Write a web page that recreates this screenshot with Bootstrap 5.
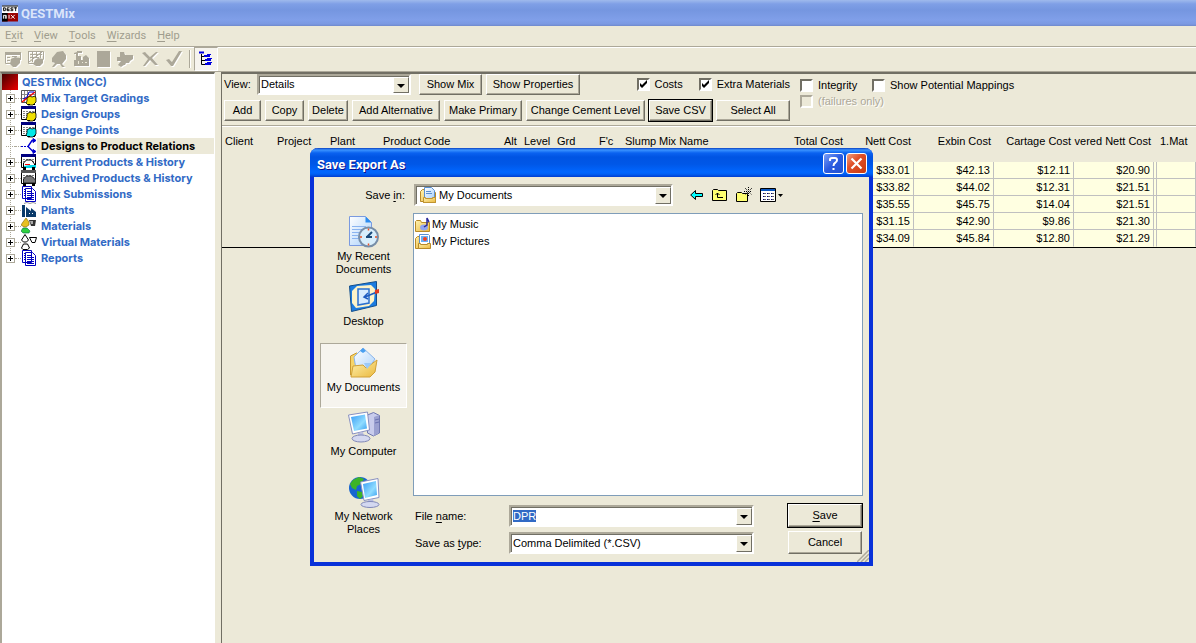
<!DOCTYPE html>
<html lang="en">
<head>
<meta charset="utf-8">
<meta name="viewport" content="width=device-width, initial-scale=1">
<title>QESTMix</title>
<link rel="stylesheet" href="https://cdn.jsdelivr.net/npm/bootstrap@5.3.0/dist/css/bootstrap.min.css">
<style>
:root{--face:#ece9d8;--shade:#aca899;--dark:#716f64;--link:#316ac5}
body{font-family:"Liberation Sans",Arial,sans-serif;font-size:11px;line-height:13px;color:#000;background:var(--face)}
svg{display:block;flex:none}
.app{overflow:hidden}
.app-title{height:26px;padding:0 2px;gap:3px;background:linear-gradient(#9fbaec 0,#7f9fe6 4px,#7596e0 10px,#809fe9 20px,#7b99e2 24px,#6f89cb 26px);color:#dbe5fa;font:bold 13px Roboto,sans-serif}
.app-title h1{font:inherit;margin:0}
.menu-bar{height:20px;padding:0 5px;gap:11px}
.menu-bar a{color:#a09d8e;text-decoration:none;font:11px/18px Roboto,sans-serif}
u{text-underline-offset:2px}
.tool-bar{height:26px;padding:0 5px;gap:7px;border-top:1px solid var(--shade);border-bottom:1px solid var(--shade);box-shadow:inset 0 1px #fff}
.tool-bar button{border:0;padding:0;background:none;color:var(--shade);filter:drop-shadow(1px 1px 0 #fff)}
.tool-bar .rule{width:2px;height:18px;background:var(--shade);border-right:1px solid #fff}
.tool-bar button.pressed{filter:none;padding:3px;border:1px solid;border-color:var(--shade) #fff #fff var(--shade);background:#f6f4ee;margin-left:-4px}
.tree-pane{width:215px;background:#fff;border:solid;border-width:2px 1px 0 2px;border-color:var(--dark) #fff #fff var(--shade)}
.splitter{width:6px}
.tree,.tree ul{list-style:none;margin:0;padding:0}
.tree a{color:var(--link);text-decoration:none;font:bold 11px/16px Inter,Arial,sans-serif;white-space:nowrap}
.tree li li{display:flex;height:16px;align-items:center;padding-left:4px;background:repeating-linear-gradient(#aca899 0 1px,#fff 1px 2px) 8px 0/1px 16px no-repeat}
.tree li li:last-child{background-size:1px 8px}
.tree li li .lead-line{width:6px;border-top:1px dotted var(--shade)}
.tree li li a{padding-left:4px;flex:1}
.expander{width:9px;height:9px;padding:0;border:1px solid var(--shade);background:linear-gradient(#000,#000) 50%/5px 1px no-repeat,linear-gradient(#000,#000) 50%/1px 5px no-repeat,#fff}
.leaf{width:9px;border-top:1px dotted var(--shade)}
.tree .picked{background:var(--face);color:#000}
.root-icon{width:16px;height:16px;background:linear-gradient(135deg,#400 0,#900 50%,#e00)}
.work{border-left:1px solid var(--dark);border-top:2px solid var(--dark);min-width:0}
.controls{padding:0 2px;height:52px;border-bottom:1px solid var(--shade);box-shadow:0 1px #fff}
.controls .combo{height:21px;width:154px}
.view-row>label{width:33px}
.xp-btn{border:1px solid;border-color:#fff var(--dark) var(--dark) #fff;box-shadow:inset -1px -1px var(--shade);background:var(--face);height:21px;padding:0;text-align:center;color:#000;line-height:17px;white-space:nowrap;flex:none}
.xp-btn.default{outline:1px solid #000;outline-offset:0}
.w37{width:37px}.w39{width:39px}.w40{width:40px}.w63{width:63px}.w74{width:74px}.w78{width:78px}.w88{width:88px}.w94{width:94px}.w119{width:119px}
.combo{position:relative;height:22px;border:2px solid;border-color:var(--shade) #fff #fff var(--shade);box-shadow:inset 1px 1px var(--dark);background:#fff}
.combo select,.combo input{appearance:none;border:0;background:none;outline:0;width:100%;height:100%;padding:0 18px 0 2px;font:inherit;color:#000}
.combo input::selection{background:#316ac5;color:#fff}
.combo .drop{position:absolute;right:0;top:1px;bottom:0;width:16px;pointer-events:none;border:1px solid;border-color:#fff var(--dark) var(--dark) #fff;background:var(--face)}
.combo .drop::after{content:"";position:absolute;left:3px;top:6px;border:4px solid transparent;border-top-color:#000;border-bottom:0}
.tick{gap:5px;white-space:nowrap}
.tick input{appearance:none;width:13px;height:13px;margin:0;border:2px solid;border-color:var(--dark) #fff #fff var(--dark);background:#fff;flex:none}
.tick input:checked{background:#fff url("data:image/svg+xml,%3Csvg xmlns='http://www.w3.org/2000/svg' viewBox='0 0 9 9'%3E%3Cpath d='M1 3v3l2 2 5-5V0L3 5z'/%3E%3C/svg%3E") center/9px 9px no-repeat}
.tick input:disabled{background:var(--face);border-color:var(--shade) #fff #fff var(--shade)}
.tick input:disabled+label{color:var(--shade);text-shadow:1px 1px #fff}
.filters{width:72px;gap:3px}
.filter-top{padding-top:5px}
.costs-grid{table-layout:fixed;width:100%;min-width:974px;border-collapse:separate;border-spacing:0;border-bottom:1px solid #000}
.costs-grid th{height:36px;padding:9px 3px 0;font-weight:400;vertical-align:top;white-space:nowrap}
.costs-grid th.tight{padding-left:0}
.costs-grid td{height:17px;padding:0 3px;line-height:16px;text-align:right}
.costs-grid td.money{background:#ffffe1;border-right:1px solid #c0c0c0;border-bottom:1px solid #c0c0c0}
.costs-grid tr:last-child td.money{border-bottom-color:#ffffe1}
.save-dialog{position:absolute;left:310px;top:148px;width:563px;border:solid #0831d9;border-width:0 4px 4px;border-radius:8px 8px 0 0;background:var(--face)}
.dialog-title{margin:0 -4px;padding:2px 6px 0 7px;height:29px;gap:2px;border-radius:8px 8px 0 0;background:linear-gradient(#0a3fc0 0,#3a93ff 2px,#0a62f0 5px,#0054e3 9px,#0057e7 16px,#0066ff 24px,#0061f5 26px,#003dd0 29px);color:#fff}
.dialog-title h2{font:bold 13px/16px Roboto,sans-serif;margin:0;padding-top:2px;text-shadow:1px 1px #0f1089}
.dialog-title button{width:21px;height:21px;border:1px solid #fff;border-radius:3px;padding:0;background:linear-gradient(135deg,#7aa0f8,#2a5be0 50%,#2352d0)}
.dialog-title button.shut{background:linear-gradient(135deg,#f0a080,#e0502a 40%,#c83a10)}
.dialog-body{display:grid;grid-template-columns:87px 1fr;column-gap:6px;padding:0 6px}
.look-in{grid-column:1/3;height:36px;gap:9px}
.look-in>label{width:85px;text-align:right}
.look-in .combo{width:259px}
.look-in .combo select{padding-left:23px}
.look-in .combo svg{position:absolute;left:4px;top:1px;pointer-events:none}
.plain{border:0;background:none;padding:0}
.places{grid-row:2/4;grid-column:1}
.places button{display:flex;flex-direction:column;align-items:center;gap:2px;width:100%;height:65px;padding:2px 0 0;border:1px solid transparent;background:none;color:#000;line-height:13px}
.places button.on{border-color:var(--shade) #fff #fff var(--shade);background:#f6f4ee;padding-top:3px}
.file-list{height:283px;border:1px solid #7f9db9;background:#fff;padding:2px 1px}
.file-list a{display:flex;align-items:center;gap:1px;height:17px;color:#000;text-decoration:none}
.form-area{padding:8px 0 8px 2px;display:grid;grid-template-columns:94px 245px 1fr;row-gap:4px;align-items:center}
.form-area label{padding-top:1px}
.form-area .combo select,.form-area .combo input{padding-top:1px}
.form-area .xp-btn{width:74px;justify-self:end;height:23px;margin-right:1px}
.grip{position:absolute;right:0;bottom:0}
</style>
</head>
<body>
<svg width="0" height="0" class="position-absolute" aria-hidden="true">
 <defs>
  <linearGradient id="screen" x1="0" y1="0" x2="1" y2="1"><stop offset="0" stop-color="#3a9cf4"/><stop offset=".6" stop-color="#8fdcff"/><stop offset="1" stop-color="#3aa0f0"/></linearGradient>
  <linearGradient id="gold" x1="0" y1="0" x2="1" y2="1"><stop offset="0" stop-color="#fff2b0"/><stop offset="1" stop-color="#eab83c"/></linearGradient>
  <linearGradient id="paper" x1="0" y1="0" x2="1" y2="1"><stop offset="0" stop-color="#fff"/><stop offset="1" stop-color="#a8d0fa"/></linearGradient>
  <symbol id="sheet" viewBox="0 0 16 16"><path fill="#fff" stroke="#000" d="M.5 1.500h14v12H.5z"/><path fill="#000080" d="M0 0h15v3H0z"/><path stroke="#808080" stroke-dasharray="2 1" d="M2 5.500h11M2 7.500h11M2 9.500h11M2 11.500h11"/></symbol>
  <symbol id="blob" viewBox="0 0 16 16"><path d="M6 8l3-2 2 1 3-1 1 2v4l-3 3H7l-2-2 1-2z" stroke="#000" stroke-width=".8"/><path fill="#000" d="M7 14h2v1H7zM12 14h2v1h-2z"/></symbol>
  <symbol id="pages" viewBox="0 0 16 16"><path fill="#fff" stroke="#0000c0" d="M1.500.5v12h9V.5zM4.500 2.500v13h10v-10l-3-3z"/><path stroke="#0000c0" d="M3 3.500h1M3 5.500h1M3 7.500h1M3 9.500h1M6 5.500h5M6 7.500h7M6 9.500h7M6 11.500h7M6 13.500h7"/></symbol>
  <symbol id="docs" viewBox="0 0 16 16"><path fill="url(#gold)" stroke="#b88a28" d="M.5 14.500v-10l2-2h3v12zM3 15.500h12.500v-10H14"/><path fill="url(#paper)" stroke="#5a90d0" d="M4.500.5h7l3 3v8h-10z"/><path stroke="#5a90d0" d="M6 4.500h5M6 6.500h6"/><path fill="url(#gold)" stroke="#c09430" d="M3.500 10.500h2v1h7v-1h3v5h-12z"/></symbol>
 </defs>
</svg>

<div class="app vh-100 d-flex flex-column position-relative">
 <header class="app-title d-flex align-items-center">
  <svg width="16" height="17" viewBox="0 0 17 17"><path fill="#fff" d="M0 0h17v8H0z"/><path fill="#900" d="M0 8h17v9H0z"/><path fill="#000" d="M0 0h17v1H0zM0 8h6v9H0z"/><path fill="none" stroke="#000" d="M1.500 2.500h2v3h-2zM8 2.500H5.500v3H8M5 4.500h3M12 2.500H9.500v1.500h2v1.500H9M12.500 2.500H16M14.500 2v4"/><path fill="none" stroke="#fff" d="M1.500 14v-3.500h3V14M3.500 11v3M7.500 10v4M9.500 10l4 4M13.500 10l-4 4"/></svg>
  <h1>QESTMix</h1>
 </header>

 <nav class="menu-bar d-flex align-items-center" aria-label="Main menu">
  <a href="#">E<u>x</u>it</a><a href="#"><u>V</u>iew</a><a href="#"><u>T</u>ools</a><a href="#"><u>W</u>izards</a><a href="#"><u>H</u>elp</a>
 </nav>

 <div class="tool-bar d-flex align-items-center" role="toolbar" aria-label="Tools">
  <button type="button" aria-label="Product"><svg width="16" height="16" fill="currentColor"><path fill="none" stroke="currentColor" d="M.5 1.500h15V9M.5 1v11.500H6"/><path d="M0 1h16v3H0zM2 6h3v1H2zM7 5h5v1H7zM2 9h3v1H2zM6 8l4-2 5 1v5l-4 4H8l-3-3z"/></svg></button>
  <button type="button" aria-label="Grading"><svg width="16" height="16" fill="currentColor"><path fill="none" stroke="currentColor" d="M.5.5h15v8M.5 0v12.500H6M2 3.500h12M2 6.500h9M4.500 1v10M8.500 1v6M12.500 1v6M1 11L14 1"/><path d="M7 9l3-2 5 1v4l-3 3H8l-3-2z"/></svg></button>
  <button type="button" aria-label="Material"><svg width="16" height="16" fill="currentColor"><path d="M6 1l6-1 3 4v4l-4 5 3 3h-3l-2-3H6l-3 3H1l3-4-3-1V7z"/></svg></button>
  <button type="button" aria-label="Plant"><svg width="16" height="16" fill="currentColor"><path d="M0 2l3-1V0h5v2H4v3h3v4h2V6l3-2 3 3v8H0V9h2V3H0z"/><path fill="#ece9d8" d="M4 10h1v3H4zM8 11h1v1H8zM11 11h2v1h-2z"/></svg></button>
  <button type="button" aria-label="Report"><svg width="13" height="16" fill="currentColor"><path d="M0 0h13v16H0z"/></svg></button>
  <button type="button" aria-label="Mixer"><svg width="18" height="16" fill="currentColor"><path d="M3 1h4l1 3h8v4l-3 2-1 2h-3l-1 2H7l-3 2-3-2 3-4H0V6h3z"/></svg></button>
  <button type="button" aria-label="Delete"><svg width="17" height="16" fill="currentColor"><path d="M0 2l3-1 5 5 6-5h2l-6 6 6 7h-3L8 9l-5 6H1l5-7z"/></svg></button>
  <button type="button" aria-label="Accept"><svg width="16" height="16" fill="currentColor"><path d="M0 9l3-1 3 3 7-11h3L7 15H5z"/></svg></button>
  <span class="rule"></span>
  <button type="button" class="pressed" aria-label="Show tree"><svg width="16" height="16" stroke="#0000e0" fill="none"><path d="M1 1.500h5" stroke-width="2"/><path stroke="#000" d="M3.500 3v10.500H7M3.500 5.500H7M3.500 9.500h4"/><path stroke-width="2" d="M6 5h6M7 9h6M7 13h6"/><path d="M9 3.500h4M9 7.500h5M9 11.500h5"/></svg></button>
 </div>

 <div class="d-flex flex-fill">
  <aside class="tree-pane flex-shrink-0">
   <ul class="tree">
    <li>
     <div class="d-flex align-items-center gap-1"><span class="root-icon"></span><a href="#">QESTMix (NCC)</a></div>
     <ul>
      <li><button class="expander" type="button" aria-label="Expand"></button><span class="lead-line"></span><svg width="16" height="16"><path fill="#fff" stroke="#555" d="M.5.5h14v12H.5z"/><path stroke="#888" d="M3.500 1v11M6.500 1v11M1 4.500h13M1 8.500h10"/><path stroke="red" d="M1 12L14 2" stroke-width="1.500"/><path stroke="#00c" fill="none" d="M2 9l4-2 2-5h5"/><use href="#blob" fill="#f0e000"/></svg><a href="#">Mix Target Gradings</a></li>
      <li><button class="expander" type="button" aria-label="Expand"></button><span class="lead-line"></span><svg width="16" height="16"><use href="#sheet"/><use href="#blob" fill="#f0e000"/></svg><a href="#">Design Groups</a></li>
      <li><button class="expander" type="button" aria-label="Expand"></button><span class="lead-line"></span><svg width="16" height="16"><use href="#sheet"/><use href="#blob" fill="#00e8e8"/></svg><a href="#">Change Points</a></li>
      <li><span class="leaf"></span><span class="lead-line"></span><svg width="16" height="16" stroke="#0000d0" fill="none"><path stroke-dasharray="2 1" d="M0 8.500h7"/><path d="M13 2.500H11l-4 6 5 5h2" stroke-width="1.400"/><path fill="#0000d0" d="M12 .5l3 2-3 2zM12 11.500l3 2-3 2z"/></svg><a href="#" class="picked" aria-current="true">Designs to Product Relations</a></li>
      <li><button class="expander" type="button" aria-label="Expand"></button><span class="lead-line"></span><svg width="16" height="16"><use href="#sheet"/><path fill="#fff" stroke="#000" d="M2.500 9l3-3h5l3 4v3h-11z"/><path stroke="red" d="M4 10.500h5"/><path fill="#00d8e8" d="M9 11h6v3H3v-2z"/><path d="M2 13h3v3H2zM11 13h3v3h-3z"/></svg><a href="#">Current Products &amp; History</a></li>
      <li><button class="expander" type="button" aria-label="Expand"></button><span class="lead-line"></span><svg width="16" height="16"><use href="#sheet"/><path fill="#555" d="M0 0h15v3H0z"/><path fill="#777" stroke="#222" d="M2.500 9l3-3h5l4 4v3h-12z"/><path d="M2 13h3v3H2zM11 13h3v3h-3z"/></svg><a href="#">Archived Products &amp; History</a></li>
      <li><button class="expander" type="button" aria-label="Expand"></button><span class="lead-line"></span><svg width="16" height="16"><use href="#pages"/></svg><a href="#">Mix Submissions</a></li>
      <li><button class="expander" type="button" aria-label="Expand"></button><span class="lead-line"></span><svg width="16" height="16"><path fill="none" stroke="#999" d="M3 1.500l3-1 3 1 3-1 3 1"/><path fill="#0a3a6a" d="M1 3h3v12H1zM5 5l5 4V6l5 4v5H5z"/><path fill="#fff" d="M8 11h1v1H8zM11 11h1v1h-1z"/></svg><a href="#">Plants</a></li>
      <li><button class="expander" type="button" aria-label="Expand"></button><span class="lead-line"></span><svg width="16" height="16"><path fill="#e8c020" stroke="#806000" stroke-width=".6" d="M5 0l3 4v3l-3 2H3L0 7l2-3z"/><path fill="#333" d="M8 2h7l-1 6h-4z"/><path fill="#aaa" d="M9 3h3v3h-2z"/><path fill="#30d040" stroke="#064" stroke-width=".6" d="M0 13l2-3h4l3 3-1 2H2z"/></svg><a href="#">Materials</a></li>
      <li><button class="expander" type="button" aria-label="Expand"></button><span class="lead-line"></span><svg width="16" height="16" fill="#fff" stroke="#000"><path d="M4 .5L7.500 6l-2 2h-3l-2-2zM8.500 3.500h7l-1.500 5h-3zM.5 14l2-4h4l2 4-2 1.500H2z"/></svg><a href="#">Virtual Materials</a></li>
      <li><button class="expander" type="button" aria-label="Expand"></button><span class="lead-line"></span><svg width="16" height="16"><use href="#pages"/></svg><a href="#">Reports</a></li>
     </ul>
    </li>
   </ul>
  </aside>
  <div class="splitter flex-shrink-0"></div>

  <main class="work flex-fill overflow-hidden">
   <div class="controls d-flex align-items-start">
    <div class="d-flex flex-column" style="gap:5px">
     <div class="view-row d-flex align-items-center">
      <label for="view">View:</label>
      <div class="combo"><select id="view"><option>Details</option></select><span class="drop"></span></div>
      <button type="button" class="xp-btn w63 ms-2">Show Mix</button>
      <button type="button" class="xp-btn w94 ms-1">Show Properties</button>
      <div class="tick d-flex align-items-center ms-auto"><input type="checkbox" id="costs" checked><label for="costs">Costs</label></div>
      <div class="tick d-flex align-items-center ms-3"><input type="checkbox" id="extra" checked><label for="extra">Extra Materials</label></div>
     </div>
     <div class="d-flex" style="gap:4px">
      <button type="button" class="xp-btn w37">Add</button>
      <button type="button" class="xp-btn w39">Copy</button>
      <button type="button" class="xp-btn w40">Delete</button>
      <button type="button" class="xp-btn w88">Add Alternative</button>
      <button type="button" class="xp-btn w78">Make Primary</button>
      <button type="button" class="xp-btn w119">Change Cement Level</button>
      <button type="button" class="xp-btn w63 default">Save CSV</button>
      <button type="button" class="xp-btn w74">Select All</button>
     </div>
    </div>
    <div class="filters filter-top d-flex flex-column" style="margin-left:10px">
     <div class="tick d-flex align-items-center"><input type="checkbox" id="integrity"><label for="integrity">Integrity</label></div>
     <div class="tick d-flex align-items-center"><input type="checkbox" id="failures" disabled><label for="failures">(failures only)</label></div>
    </div>
    <div class="tick filter-top d-flex align-items-center"><input type="checkbox" id="mappings"><label for="mappings">Show Potential Mappings</label></div>
   </div>

   <table class="costs-grid">
    <colgroup><col style="width:52px"><col style="width:53px"><col style="width:53px"><col style="width:121px"><col style="width:20px"><col style="width:33px"><col style="width:42px"><col style="width:26px"><col style="width:34px"><col style="width:110px"><col style="width:80px"><col style="width:68px"><col style="width:80px"><col style="width:80px"><col style="width:80px"><col style="width:3px"><col></colgroup>
    <thead><tr><th>Client</th><th>Project</th><th>Plant</th><th>Product Code</th><th>Alt</th><th>Level</th><th>Grd</th><th>F'c</th><th>Slump</th><th>Mix Name</th><th class="text-end">Total Cost</th><th class="text-end">Nett Cost</th><th class="text-end">Exbin Cost</th><th class="text-end">Cartage Cost</th><th class="text-end tight">vered Nett Cost</th><th class="p-0"></th><th>1.Mat</th></tr></thead>
    <tbody>
     <tr><td colspan="10"></td><td class="money"></td><td class="money">$33.01</td><td class="money">$42.13</td><td class="money">$12.11</td><td class="money">$20.90</td><td class="money p-0"></td><td class="money"></td></tr>
     <tr><td colspan="10"></td><td class="money"></td><td class="money">$33.82</td><td class="money">$44.02</td><td class="money">$12.31</td><td class="money">$21.51</td><td class="money p-0"></td><td class="money"></td></tr>
     <tr><td colspan="10"></td><td class="money"></td><td class="money">$35.55</td><td class="money">$45.75</td><td class="money">$14.04</td><td class="money">$21.51</td><td class="money p-0"></td><td class="money"></td></tr>
     <tr><td colspan="10"></td><td class="money"></td><td class="money">$31.15</td><td class="money">$42.90</td><td class="money">$9.86</td><td class="money">$21.30</td><td class="money p-0"></td><td class="money"></td></tr>
     <tr><td colspan="10"></td><td class="money"></td><td class="money">$34.09</td><td class="money">$45.84</td><td class="money">$12.80</td><td class="money">$21.29</td><td class="money p-0"></td><td class="money"></td></tr>
    </tbody>
   </table>
  </main>
 </div>

 <section class="save-dialog" role="dialog" aria-labelledby="dlg-title">
  <div class="dialog-title d-flex align-items-center">
   <h2 id="dlg-title" class="me-auto">Save Export As</h2>
   <button type="button" aria-label="Help"><svg width="19" height="19" fill="none" stroke="#fff" stroke-width="2"><path d="M6 7V5.500Q6 4 8 4h3q2 0 2 2 0 1.500-1.500 2.500Q9.500 9.500 9.500 12M9.500 14v2"/></svg></button>
   <button type="button" class="shut" aria-label="Close"><svg width="19" height="19" stroke="#fff" stroke-width="2.200"><path d="M4.500 4.500l10 10M14.500 4.500l-10 10"/></svg></button>
  </div>
  <div class="dialog-body">
   <div class="look-in d-flex align-items-center">
    <label for="look">Save <u>i</u>n:</label>
    <div class="combo"><svg width="16" height="16"><use href="#docs"/></svg><select id="look"><option>My Documents</option></select><span class="drop"></span></div>
    <div class="d-flex align-items-center ms-2" style="gap:8px">
     <button class="plain" type="button" aria-label="Back"><svg width="14" height="12"><path fill="#0ff" stroke="#000" d="M.7 6L5.500 1.500v3h7v3h-7v3z"/></svg></button>
     <button class="plain" type="button" aria-label="Up one level"><svg width="16" height="14"><path fill="#ffff70" stroke="#000" d="M.5 12.500v-10l1-1h4l1 1h8v10z"/><path fill="none" stroke="#000" d="M5.500 5v4.500H11M3.500 7L5.500 5l2 2"/></svg></button>
     <button class="plain" type="button" aria-label="New folder"><svg width="16" height="16"><path fill="#ffff70" stroke="#000" d="M.5 14.500v-8l1-1h4l1 1h5v8z"/><path stroke="#000" stroke-dasharray="1 1" d="M12.500 0v10M8 4.500h8M9 1l7 7M16 1L9 8"/></svg></button>
     <button class="plain" type="button" aria-label="Views"><svg width="24" height="14"><path fill="#fff" stroke="#000" d="M.5.5h15v13H.5z"/><path fill="#0a56c0" d="M1 1h14v2H1z"/><path fill="#000080" d="M3 5h1v1H3zM7 5h1v1H7zM11 5h1v1h-1zM3 8h1v1H3zM7 8h1v1H7zM11 8h1v1h-1zM3 11h1v1H3zM7 11h1v1H7zM11 11h1v1h-1z"/><path stroke="#666" stroke-dasharray="2 2" d="M4 5.500h10M4 8.500h10M4 11.500h10"/><path d="M18 6h5l-2.500 3z"/></svg></button>
    </div>
   </div>

   <div class="places" role="group" aria-label="Places">
    <button type="button"><svg width="32" height="32"><path fill="url(#paper)" stroke="#7a9ae0" d="M1.500.5h16l6 6v23h-22z"/><path fill="#2a8cf0" d="M17.500.5v6h6z"/><path stroke="#8ab4f0" d="M4 10.500h14M4 13.500h10M4 16.500h7M4 19.500h6M4 22.500h7"/><circle cx="20.500" cy="21" r="9.500" fill="#d8eefc" stroke="#778ea8" stroke-width="2"/><path stroke="#1a4a7a" stroke-width="2" fill="none" d="M19 21l5-5M18 21h6"/><path stroke="#f05020" stroke-width="1.500" d="M20.500 12.500v2M20.500 27.500v2M12 21h2M27 21h2"/></svg><span>My Recent<br>Documents</span></button>
    <button type="button"><svg width="32" height="32"><path fill="#1c7ce0" stroke="#14508c" d="M1.500 5l27-4.500v24l-25 6z"/><path fill="#fdf3c8" d="M9 5l14-1 4 4-1 12-5 5-13 2-4-5V10z"/><path fill="#d8ecff" stroke="#2a70d0" stroke-width="1.500" d="M10 8h11v14l-11 2z"/><path fill="none" stroke="#1c5ac0" stroke-width="1.500" d="M17 16l12-5M20 12l-4 4 4 2"/><path fill="#e03a20" d="M27 9l4-1v4l-4 1z"/></svg><span>Desktop</span></button>
    <button type="button" class="on"><svg width="32" height="32"><path fill="#f6d468" stroke="#c89830" d="M2.500 28V9l6-3 4 3v14z"/><path fill="url(#paper)" stroke="#8ab4ea" d="M6 10l9-9 12 11-10 15-9-5z"/><path fill="#4aa0f0" d="M12 4l3-3 3 3-3 2z"/><path fill="url(#gold)" stroke="#d0a038" d="M3 30l2-11 10-1 3 3 11-8-2 12-5 5z"/><path fill="#9ccaf8" d="M16 16h8l-5 6z"/></svg><span>My Documents</span></button>
    <button type="button"><svg width="32" height="32"><path fill="#c8ccec" stroke="#7078b0" d="M19.500 4l6-2.500 6 3V22l-6 3-6-3z"/><path fill="#9aa0d0" d="M26 6l5-2v18l-5 3z"/><path stroke="#6a72b0" d="M27 9l4-1M27 12l4-1"/><path fill="#fff" stroke="#8890c0" d="M.5 4l19-3 2 18-17 4z"/><path fill="url(#screen)" d="M3 6l14-2.500 2 14L6 20z"/><path fill="#b8bce0" d="M10 22l5-1 1 4h-6z"/><ellipse cx="13" cy="27.500" rx="9" ry="3.500" fill="#d4d8f0" stroke="#8088b8"/></svg><span>My Computer</span></button>
    <button type="button"><svg width="32" height="32"><circle cx="12" cy="12" r="11" fill="#1866d0"/><path fill="#3cb428" d="M5 4l6-3 5 2-3 5-4 2-1 4-4-2-2-4zM9 15l5 1 1 4-3 3-3-3z"/><path fill="#fff" stroke="#8890c0" d="M12.500 6L30 2.500l1 19-15 3z"/><path fill="url(#screen)" d="M15 8l13-3 1 14-12 3z"/><path fill="#b8bce0" d="M20 24l5-1 1 4h-6z"/><ellipse cx="22" cy="28.500" rx="9" ry="3" fill="#d4d8f0" stroke="#8088b8"/></svg><span>My Network<br>Places</span></button>
   </div>

   <div class="file-list">
    <a href="#"><svg width="16" height="16"><path fill="url(#gold)" stroke="#b88a28" d="M.5 14.500v-10l1-1h4l1 2h8v9z"/><ellipse cx="9" cy="10.500" rx="4" ry="3" fill="#90a4f0"/><path fill="none" stroke="#2a2a9a" stroke-width="1.500" d="M9 10l3-2V1l2 4"/></svg>My Music</a>
    <a href="#"><svg width="16" height="16"><path fill="url(#gold)" stroke="#b88a28" d="M.5 14.500v-10l2-2h3v12z"/><path fill="#fff" stroke="#5a90d0" d="M4.500.5h9l1 1v10h-10z"/><path fill="#6ab0f8" d="M6 2h7v6H6z"/><circle cx="10" cy="5" r="2" fill="#f04020"/><path fill="url(#gold)" stroke="#b88a28" d="M3.500 9.500h2v1h7v-1h3v5h-12z"/></svg>My Pictures</a>
   </div>

   <form class="form-area" onsubmit="return false">
    <label for="fname">File <u>n</u>ame:</label>
    <div class="combo"><input type="text" id="fname" value="DPR" autocomplete="off" spellcheck="false"><span class="drop"></span></div>
    <button type="submit" class="xp-btn default"><u>S</u>ave</button>
    <label for="ftype">Save as <u>t</u>ype:</label>
    <div class="combo"><select id="ftype"><option>Comma Delimited (*.CSV)</option></select><span class="drop"></span></div>
    <button type="button" class="xp-btn">Cancel</button>
   </form>
  </div>
  <svg class="grip" width="12" height="12" stroke="#aca899" stroke-width="1.500"><path d="M0 12L12 0M4 12l8-8M8 12l4-4"/></svg>
 </section>
</div>
<script src="https://cdn.jsdelivr.net/npm/bootstrap@5.3.0/dist/js/bootstrap.bundle.min.js"></script>
<script>
const fileName = document.getElementById('fname');
fileName.focus();
fileName.select();
</script>
</body>
</html>
